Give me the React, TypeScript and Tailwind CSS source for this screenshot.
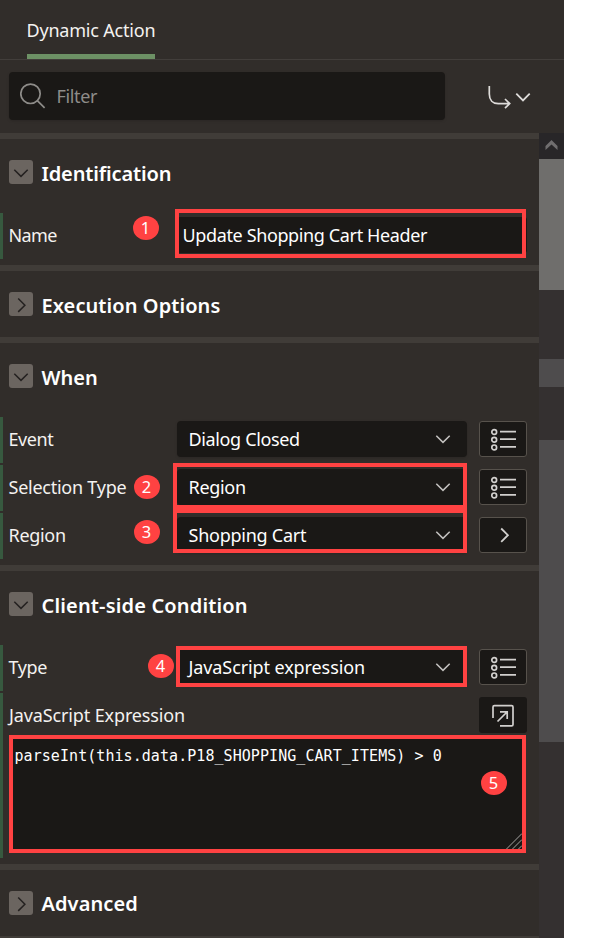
import type { ReactNode } from "react";

function Chevron({ dir, className, weight = 1.5 }: { dir: "down" | "right"; className: string; weight?: number }) {
  return (
    <svg viewBox="0 0 16 16" className={className} fill="none" stroke="currentColor">
      <path d={dir === "down" ? "M1.3 4.700 8 11.400l6.700-6.700" : "M5.200 1.500 11.900 8.200 5.200 14.900"} strokeWidth={weight} />
    </svg>
  );
}

function ListIcon() {
  return (
    <svg width="26" height="24" viewBox="0 0 26 24" fill="none" stroke="#d2d0ce" strokeWidth="1.7">
      <circle cx="4.200" cy="5" r="2.400" />
      <circle cx="4.200" cy="12.700" r="2.400" />
      <circle cx="4.200" cy="20.400" r="2.400" />
      <path d="M10 4.600h16M10 12.100h16M10 19.900h16" strokeWidth="1.700" />
    </svg>
  );
}

function Badge({ n, className }: { n: number; className: string }) {
  return (
    <span
      className={`absolute flex h-6 w-[26px] items-center justify-center rounded-[50%] bg-[#ff4242] pt-px font-['Noto_Sans'] text-[16.5px] leading-none text-white ${className}`}
    >
      {n}
    </span>
  );
}

function Highlight({ className }: { className: string }) {
  return <span className={`pointer-events-none absolute border-4 border-[#ff4242] ${className}`} />;
}

function Section({ title, spacing, open, children }: { title: string; spacing: string; open?: boolean; children?: ReactNode }) {
  return (
    <section className="border-b-[6px] border-[#403c38]">
      <header className={`flex items-start gap-[8.5px] pl-[9px] pt-[21px] ${open ? "h-[74px]" : "h-[66px]"}`}>
        <button className="flex size-6 shrink-0 items-center justify-center rounded-[3px] bg-[#6b6560] text-[#242120]">
          <Chevron dir={open ? "down" : "right"} className="mt-0.5 size-4" />
        </button>
        <h2 className={`whitespace-nowrap pt-px text-[20px] leading-[26px] font-semibold text-white ${spacing}`}>{title}</h2>
      </header>
      {open && <div className="flex flex-col gap-0.5 pb-1.5">{children}</div>}
    </section>
  );
}

function Row({ label, spacing, children }: { label: string; spacing: string; children: ReactNode }) {
  return (
    <div className="relative flex h-[46px] items-center border-l-[3px] border-[#37593f] pl-[5.5px]">
      <label className={`w-[168.5px] whitespace-nowrap pb-0.5 ${spacing}`}>{label}</label>
      {children}
    </div>
  );
}

function Select({ value, spacing }: { value: string; spacing: string }) {
  return (
    <div className="flex h-9 w-[290px] -translate-y-px items-center justify-between rounded-[4px] bg-[#1a1816] pr-4 pl-[11.5px] text-white shadow-sm">
      <span className={`whitespace-nowrap ${spacing}`}>{value}</span>
      <Chevron dir="down" className="size-4 text-[#c4c2c0]" />
    </div>
  );
}

function SideButton({ children }: { children: ReactNode }) {
  return (
    <button className="ml-3 flex h-9 w-12 -translate-y-px items-center justify-center rounded-[3px] border border-[#57524c] bg-[#1a1816] text-[#d2d0ce]">
      {children}
    </button>
  );
}

export default function App() {
  return (
    <div className="h-[938px] w-[590px] overflow-hidden bg-white">
      <div className="flex h-full w-[564px] flex-col bg-[#312d2a] font-['Noto_Sans',sans-serif] text-[18px] leading-6 text-[#f4f2f0]">
        <nav className="flex h-[60px] shrink-0 border-b border-[#423e3b] pl-[27px]">
          <div className="h-[59px] w-32 border-b-[5px] border-[#6d9165] pt-[18px] whitespace-nowrap">
            <span className="-ml-[0.5px] tracking-[-0.2px]">Dynamic Action</span>
          </div>
        </nav>
        <div className="flex h-[73px] shrink-0 items-start pt-3 pl-[9px]">
          <div className="flex h-12 w-[436px] items-center rounded-[4px] bg-[#1a1816] pl-[11px] text-[#8e8c89] shadow-sm">
            <svg width="26" height="26" viewBox="0 0 26 26" fill="none" stroke="currentColor" strokeWidth="1.7">
              <circle cx="10.500" cy="10.800" r="9.700" />
              <path d="m17.300 17.600 7.300 7.300" />
            </svg>
            <span className="pl-[10.5px] tracking-[-0.35px]">Filter</span>
          </div>
          <button className="mt-3 ml-[43px] flex text-[#dedcda]">
            <svg width="23" height="26" viewBox="0 0 23 26" fill="none" stroke="currentColor" strokeWidth="1.700">
              <path d="M1.300 2v8c0 6 3.500 9.600 9 9.600h11M17 15l4.700 4.600-4.700 4.600" />
            </svg>
            <Chevron dir="down" className="mt-[5px] ml-1 size-4" weight={1.8} />
          </button>
        </div>
        <div className="flex min-h-0 flex-1">
          <main className="w-[539px] border-t-[6px] border-[#403c38]">
            <Section title="Identification" spacing="tracking-[-0.15px]" open>
              <Row label="Name" spacing="tracking-[-0.6px]">
                <div className="flex h-9 w-[350px] -translate-y-px items-center rounded-[3px] bg-[#1a1816] pl-[5.5px] whitespace-nowrap text-white tracking-[-0.37px]">
                  Update Shopping Cart Header
                </div>
                <Highlight className="top-[-4px] left-[172px] h-[49px] w-[351px]" />
                <Badge n={1} className="top-[3px] left-[129.5px]" />
              </Row>
            </Section>
            <Section title="Execution Options" spacing="tracking-[0.08px]" />
            <Section title="When" spacing="tracking-[0px]" open>
              <Row label="Event" spacing="tracking-[-0.4px]">
                <Select value="Dialog Closed" spacing="tracking-[-0.36px]" />
                <SideButton><ListIcon /></SideButton>
              </Row>
              <Row label="Selection Type" spacing="tracking-[-0.25px]">
                <Select value="Region" spacing="tracking-[-0.3px]" />
                <SideButton><ListIcon /></SideButton>
                <Highlight className="top-[-2px] left-[170px] h-[46px] w-[294px]" />
                <Badge n={2} className="top-[9.5px] left-[130.5px]" />
              </Row>
              <Row label="Region" spacing="tracking-[-0.3px]">
                <Select value="Shopping Cart" spacing="tracking-[-0.25px]" />
                <SideButton><Chevron dir="right" className="ml-px size-4" weight={1.8} /></SideButton>
                <Highlight className="top-[-4px] left-[170px] h-11 w-[294px]" />
                <Badge n={3} className="top-[7px] left-[130.5px]" />
              </Row>
            </Section>
            <Section title="Client-side Condition" spacing="tracking-[0.16px]" open>
              <Row label="Type" spacing="tracking-[-0.4px]">
                <Select value="JavaScript expression" spacing="tracking-[-0.1px]" />
                <SideButton><ListIcon /></SideButton>
                <Highlight className="top-px left-[173px] h-[41px] w-[291px]" />
                <Badge n={4} className="top-[9px] left-[144.5px]" />
              </Row>
              <div className="relative h-[165px] border-l-[3px] border-[#37593f] pl-1.5">
                <div className="flex h-[42px] items-start justify-between pt-1 pr-3">
                  <label className="pt-1.5 tracking-[-0.13px]">JavaScript Expression</label>
                  <button className="flex h-9 w-12 items-center justify-center rounded-[3px] bg-[#1a1816]">
                    <svg width="24" height="24" viewBox="0 0 24 24" fill="none" stroke="#d2d0ce" strokeWidth="1.700">
                      <path d="M2 15V4Q2 2.600 3.400 2.600H20.600Q22 2.600 22 4V21.400Q22 22.800 20.600 22.800H9M6.500 18.500 16 9M9 8.800H16.200V16" />
                    </svg>
                  </button>
                </div>
                <div className="relative h-[118px] w-[517px] border-4 border-[#ff4242] bg-[#1a1816] pt-[5px] pl-[1.5px] font-['DejaVu_Sans_Mono',monospace] text-[15px] leading-6 whitespace-nowrap text-white tracking-[0.06px]">
                  parseInt(this.data.P18_SHOPPING_CART_ITEMS) &gt; 0
                  <svg className="absolute right-0 bottom-0" width="16" height="16" viewBox="0 0 16 16" stroke="#a5a3a1" strokeWidth="1">
                    <path d="M0.500 16 16 0.500M6.500 16 16 6.500M12.500 16l3.500-3.500" />
                  </svg>
                </div>
                <Badge n={5} className="top-[78px] left-[477.5px]" />
              </div>
            </Section>
            <Section title="Advanced" spacing="-mt-px tracking-[0.08px]" />
          </main>
          <aside className="flex w-[25px] flex-col bg-[#343030]">
            <div className="flex h-[26px] items-start justify-center bg-[#282628] pt-[7px]">
              <svg width="13" height="11" viewBox="0 0 13 11" fill="#706e6f">
                <path d="M0.500 6 6.500 0l6 6v4L6.500 4.600 0.500 10z" />
              </svg>
            </div>
            <div className="h-[131px] bg-[#6f6e6c]" />
            <div className="mt-[69px] h-7 bg-[#4e4c4d]" />
            <div className="mt-[53px] h-[302px] bg-[#4e4c4d]" />
          </aside>
        </div>
      </div>
    </div>
  );
}
